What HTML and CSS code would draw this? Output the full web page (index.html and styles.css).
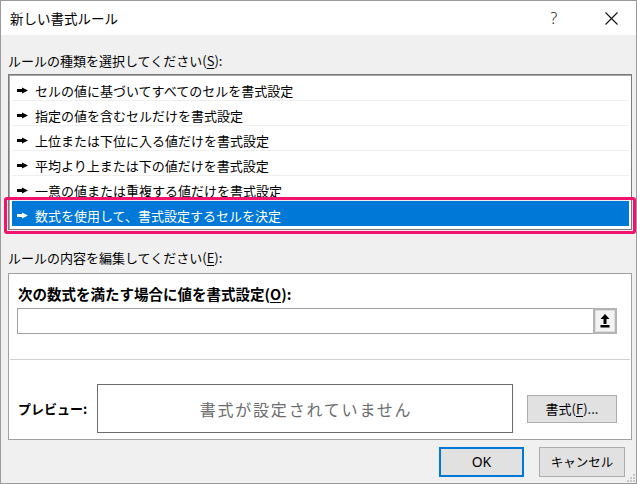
FILE: index.html
```html
<!DOCTYPE html>
<html lang="ja">
<head>
<meta charset="utf-8">
<title>新しい書式ルール</title>
<link rel="stylesheet" href="styles.css">
</head>
<body>
<div class="window">
  <div class="titlebar">
    <span class="title">新しい書式ルール</span>
    <span class="tb-btn help">?</span>
    <span class="tb-btn close">
      <svg width="13" height="13" viewBox="0 0 13 13"><path d="M0.5 0.5 L12.5 12.5 M12.5 0.5 L0.5 12.5" stroke="#111" stroke-width="1.1" fill="none"/></svg>
    </span>
  </div>
  <div class="content">
    <div class="label">ルールの種類を選択してください(<u>S</u>):</div>
    <div class="listbox">
      <div class="row"><svg class="arrow" width="11" height="7" viewBox="0 0 11 7"><polygon points="0,2 5,2 5,0.5 11,3.5 5,6.5 5,5 0,5"/></svg><span>セルの値に基づいてすべてのセルを書式設定</span></div>
      <div class="row"><svg class="arrow" width="11" height="7" viewBox="0 0 11 7"><polygon points="0,2 5,2 5,0.5 11,3.5 5,6.5 5,5 0,5"/></svg><span>指定の値を含むセルだけを書式設定</span></div>
      <div class="row"><svg class="arrow" width="11" height="7" viewBox="0 0 11 7"><polygon points="0,2 5,2 5,0.5 11,3.5 5,6.5 5,5 0,5"/></svg><span>上位または下位に入る値だけを書式設定</span></div>
      <div class="row"><svg class="arrow" width="11" height="7" viewBox="0 0 11 7"><polygon points="0,2 5,2 5,0.5 11,3.5 5,6.5 5,5 0,5"/></svg><span>平均より上または下の値だけを書式設定</span></div>
      <div class="row"><svg class="arrow" width="11" height="7" viewBox="0 0 11 7"><polygon points="0,2 5,2 5,0.5 11,3.5 5,6.5 5,5 0,5"/></svg><span>一意の値または重複する値だけを書式設定</span></div>
      <div class="row selected"><svg class="arrow" width="11" height="7" viewBox="0 0 11 7"><polygon points="0,2 5,2 5,0.5 11,3.5 5,6.5 5,5 0,5"/></svg><span>数式を使用して、書式設定するセルを決定</span></div>
    </div>
    <div class="label label-edit">ルールの内容を編集してください(<u>E</u>):</div>
    <div class="panel">
      <div class="bold-label">次の数式を満たす場合に値を書式設定(<u>O</u>):</div>
      <div class="formula">
        <div class="input"></div>
        <div class="refbtn">
          <svg width="10" height="14" viewBox="0 0 10 14"><polygon points="5,0 9.5,5 6.5,5 6.5,10 3.5,10 3.5,5 0.5,5" fill="#000"/><rect x="0.5" y="11" width="9" height="2.5" fill="#000"/></svg>
        </div>
      </div>
      <div class="sep"></div>
      <div class="preview-row">
        <div class="bold-label plabel">プレビュー:</div>
        <div class="preview">書式が設定されていません</div>
        <button class="btn fmt">書式(<u>F</u>)...</button>
      </div>
    </div>
    <div class="actions">
      <button class="btn ok">OK</button>
      <button class="btn cancel">キャンセル</button>
    </div>
  </div>
  <div class="highlight"></div>
  <svg class="grip" width="8" height="8" viewBox="0 0 8 8"><rect x="6" y="0" width="2" height="2" fill="#c8c8c8"/><rect x="3" y="3" width="2" height="2" fill="#c8c8c8"/><rect x="6" y="3" width="2" height="2" fill="#c8c8c8"/><rect x="0" y="6" width="2" height="2" fill="#c8c8c8"/><rect x="3" y="6" width="2" height="2" fill="#c8c8c8"/><rect x="6" y="6" width="2" height="2" fill="#c8c8c8"/></svg>
</div>
</body>
</html>
```

FILE: styles.css
```css
body {
  margin: 0;
  font-family: "Noto Sans CJK JP", "Noto Sans", sans-serif;
  font-size: 13px;
  color: #000;
  background: #fff;
}

u {
  text-decoration: underline;
  text-underline-offset: 2px;
  text-decoration-thickness: 1px;
}

.window {
  position: relative;
  width: 637px;
  height: 484px;
  box-sizing: border-box;
  border: 1px solid #9a9a9a;
  background: #f0f0f0;
  display: flex;
  flex-direction: column;
  overflow: hidden;
}

.titlebar {
  height: 34px;
  flex: none;
  background: #fff;
  display: flex;
  align-items: center;
  padding-left: 9px;
}

.title {
  flex: 1;
  font-size: 13.5px;
  line-height: 18px;
}

.tb-btn {
  width: 46px;
  height: 34px;
  display: flex;
  align-items: center;
  justify-content: center;
}

.help {
  margin-right: 11px;
  font-family: "Noto Sans", sans-serif;
  font-size: 16px;
  font-weight: 300;
  color: #222;
}

.close {
  margin-right: 2px;
}

.content {
  flex: 1;
  display: flex;
  flex-direction: column;
  padding: 17px 3px 0 7px;
}

.label {
  height: 18px;
  line-height: 18px;
  white-space: nowrap;
}

.listbox {
  margin-top: 4px;
  box-sizing: border-box;
  width: 624px;
  border: 1px solid #7a7a7a;
  box-shadow: inset 1px 1px 0 #a8a8a8;
  background: #fff;
  padding: 1px 2px 3px 3px;
}

.row {
  box-sizing: border-box;
  height: 25px;
  padding: 5px 0 0 5px;
  border-bottom: 1px solid #efefef;
  display: flex;
  align-items: center;
  gap: 7px;
  line-height: 18px;
  white-space: nowrap;
}

.row .arrow {
  fill: #000;
  flex: none;
}

.row.selected {
  background: #0078d7;
  border-bottom-color: #0078d7;
  color: #fff;
}

.row.selected .arrow {
  fill: #fff;
}

.label-edit {
  margin-top: 19px;
}

.panel {
  margin-top: 6px;
  box-sizing: border-box;
  width: 624px;
  border: 1px solid #a0a0a0;
  background: #fff;
  padding: 11px 0 6px 0;
}

.bold-label {
  font-weight: bold;
  font-size: 14.5px;
  line-height: 18px;
  height: 18px;
  padding-left: 9px;
  white-space: nowrap;
}

.formula {
  display: flex;
  margin: 5px 0 0 8px;
}

.input {
  box-sizing: border-box;
  width: 576px;
  height: 26px;
  border: 1px solid #a0a0a0;
  border-right: none;
  background: #fff;
}

.refbtn {
  box-sizing: border-box;
  width: 24px;
  height: 26px;
  border: 2px solid #b4b4b4;
  box-shadow: inset 0 0 0 1px #dedede;
  background: #f3f3f3;
  display: flex;
  align-items: center;
  justify-content: center;
}

.sep {
  height: 1px;
  background: #cfcfcf;
  margin: 25px 1px 0 1px;
}

.preview-row {
  display: flex;
  align-items: center;
  margin-top: 24px;
}

.plabel {
  width: 79px;
  flex: none;
  font-size: 13px;
}

.preview {
  box-sizing: border-box;
  width: 416px;
  height: 49px;
  border: 1px solid #6d6d6d;
  background: #fff;
  display: flex;
  align-items: center;
  justify-content: center;
  font-size: 16px;
  letter-spacing: 1.8px;
  color: #6d6d6d;
  padding-left: 2px;
  white-space: nowrap;
}

.btn {
  box-sizing: border-box;
  font-family: "Noto Sans CJK JP", "Noto Sans", sans-serif;
  font-size: 13px;
  color: #000;
  background: #e1e1e1;
  border: 1px solid #adadad;
  padding: 0;
  line-height: 18px;
  white-space: nowrap;
}

.fmt {
  margin-left: 14px;
  width: 90px;
  height: 28px;
}

.actions {
  display: flex;
  justify-content: flex-end;
  gap: 15px;
  margin: 7px 8px 0 0;
}

.ok {
  width: 85px;
  height: 30px;
  border: 2px solid #0078d7;
  font-family: "Noto Sans", sans-serif;
  font-size: 14px;
}

.cancel {
  width: 86px;
  height: 30px;
  font-size: 12.5px;
}

.highlight {
  position: absolute;
  left: 3px;
  top: 196px;
  width: 632px;
  height: 37px;
  box-sizing: border-box;
  border: 3px solid #f2136e;
  border-radius: 3px;
  pointer-events: none;
}

.grip {
  position: absolute;
  right: 1px;
  bottom: 1px;
}
```
